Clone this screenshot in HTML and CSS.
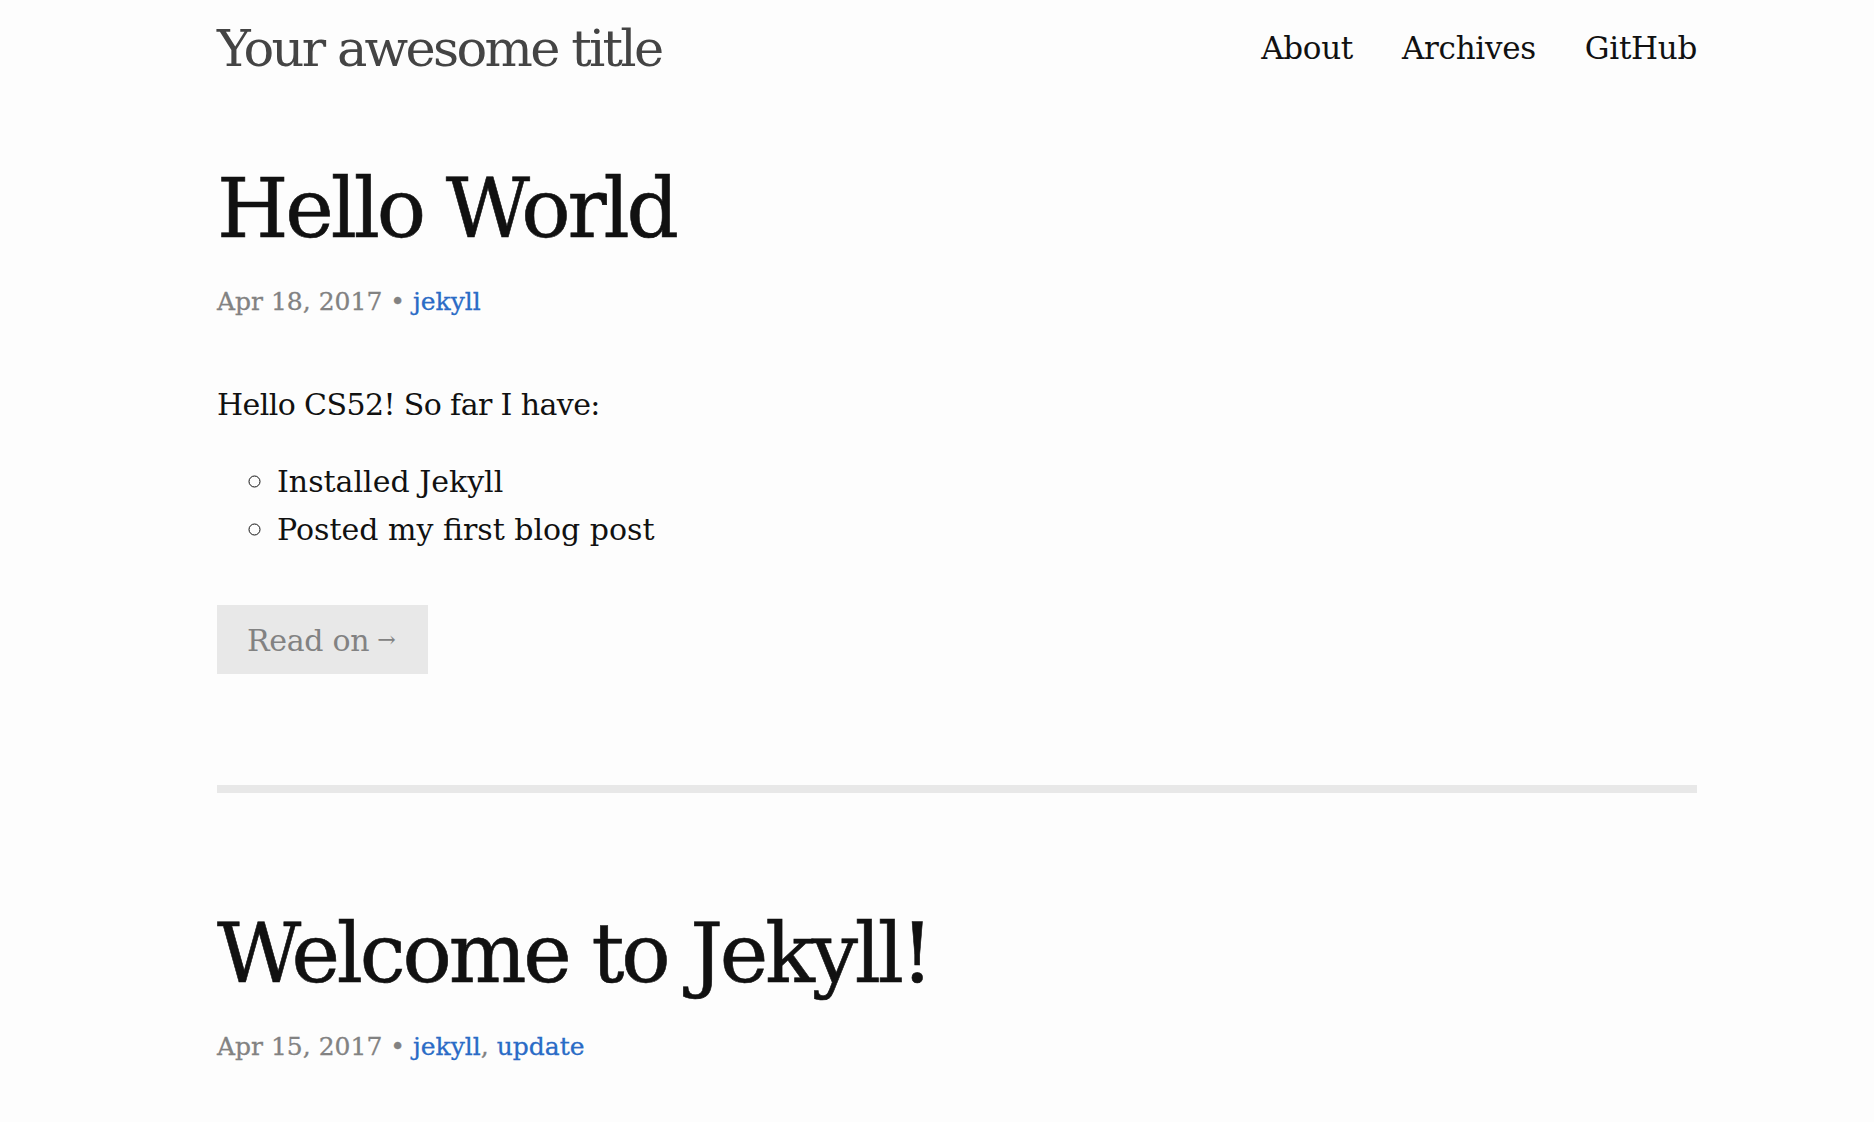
FILE: index.html
```html
<!DOCTYPE html>
<html lang="en">
<head>
<meta charset="utf-8">
<title>Your awesome title</title>
<link rel="stylesheet" href="styles.css">
</head>
<body>
<header class="site-header">
  <div class="wrapper header-row">
    <a class="site-title" href="#">Your awesome title</a>
    <nav class="site-nav">
      <a class="nav-link" href="#">About</a>
      <a class="nav-link" href="#">Archives</a>
      <a class="nav-link" href="#">GitHub</a>
    </nav>
  </div>
</header>
<main class="wrapper">
  <article class="post">
    <h1 class="post-title">Hello World</h1>
    <p class="post-meta">Apr 18, 2017 • <a class="tag" href="#">jekyll</a></p>
    <div class="post-body">
      <p class="post-text">Hello CS52! So far I have:</p>
      <ul class="post-list">
        <li>Installed Jekyll</li>
        <li>Posted my first blog post</li>
      </ul>
    </div>
    <a class="read-on" href="#">Read on<span class="arrow">→</span></a>
  </article>
  <hr class="divider">
  <article class="post">
    <h1 class="post-title">Welcome to Jekyll!</h1>
    <p class="post-meta">Apr 15, 2017 • <a class="tag" href="#">jekyll</a>, <a class="tag" href="#">update</a></p>
  </article>
</main>
</body>
</html>
```
FILE: styles.css
```css
html, body {
  margin: 0;
  padding: 0;
  background: #fdfdfd;
  color: #111;
  font-family: "DejaVu Serif", serif;
}
body {
  height: 1122px;
  overflow: hidden;
}
a { text-decoration: none; }

.wrapper {
  width: 1480px;
  margin-left: 217px;
}

.header-row {
  display: flex;
  justify-content: space-between;
  align-items: flex-start;
  height: 97px;
}
.site-title {
  font-size: 51px;
  line-height: 97px;
  color: #444;
  letter-spacing: -2.7px;
}
.site-nav {
  display: flex;
  gap: 49px;
}
.nav-link {
  font-size: 31px;
  line-height: 97px;
  color: #111;
  letter-spacing: -0.3px;
}

.post-title {
  margin: 62px 0 0;
  font-size: 82px;
  line-height: 100px;
  font-weight: normal;
  letter-spacing: -3.2px;
  color: #111;
  -webkit-text-stroke: 0.6px #111;
}
.post-meta {
  margin: 23px 0 0;
  font-size: 25px;
  line-height: 40px;
  color: #828282;
  -webkit-text-stroke: 0.3px #828282;
}
.tag {
  color: #2a6bc6;
  -webkit-text-stroke: 0.3px #2a6bc6;
}

.post-body { margin-top: 59px; }
.post-text {
  margin: 0;
  font-size: 30px;
  line-height: 48px;
  letter-spacing: -0.6px;
}
.post-list {
  margin: 27px 0 0;
  padding-left: 60px;
  list-style: circle;
  font-size: 30px;
}
.post-list li {
  height: 48px;
  line-height: 48px;
}
.post-list li::marker {
  font-size: 35px;
}

.read-on {
  display: inline-block;
  margin-top: 53px;
  height: 69px;
  padding: 0 33px 0 30px;
  background: #e8e8e8;
  color: #828282;
  font-size: 30px;
  line-height: 69px;
  letter-spacing: -0.3px;
}
.arrow {
  font-size: 22px;
  margin-left: 8px;
  vertical-align: 4px;
}

.divider {
  margin: 111px 0 0;
  height: 8px;
  border: 0;
  background: #e8e8e8;
}
.divider + .post .post-title { margin-top: 111px; }
```
